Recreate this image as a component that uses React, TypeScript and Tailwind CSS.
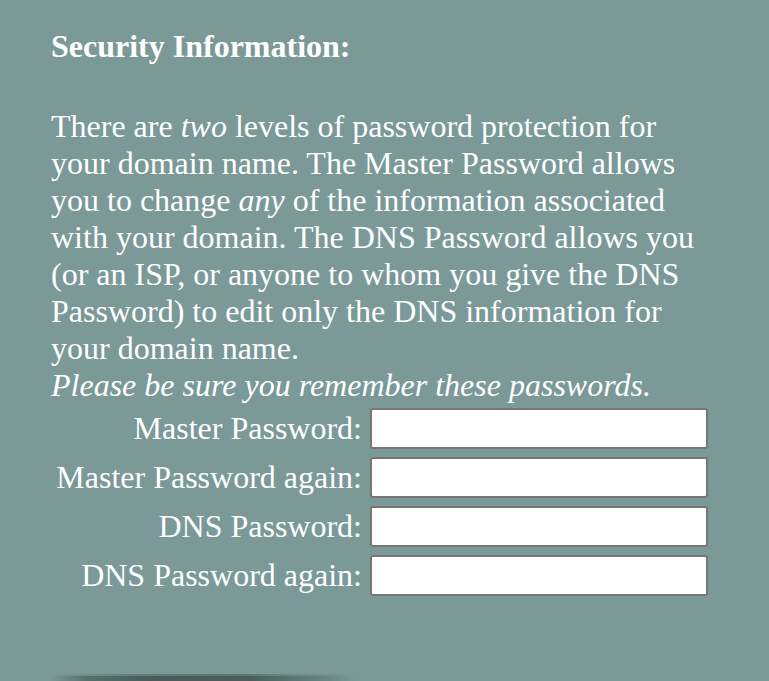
import React from "react";

const fields = [
    "Master Password:",
    "Master Password again:",
    "DNS Password:",
    "DNS Password again:",
];

const App = () => {
    return (
        <div className="h-screen w-full bg-[#7a9997] text-white font-[family-name:Liberation_Serif,serif] overflow-hidden">
            <div className="pl-[51px] pt-[28px]">
                <h2 className="text-[32px] font-bold leading-[37px]">Security Information:</h2>

                <p className="mt-[43px] text-[32px] leading-[37px] w-[660px]">
                    There are <i>two</i> levels of password protection for your domain name. The Master Password
                    allows you to change <i>any</i> of the information associated with your domain. The DNS Password
                    allows you (or an ISP, or anyone to whom you give the DNS Password) to edit only the DNS
                    information for your domain name.
                    <br />
                    <i>Please be sure you remember these passwords.</i>
                </p>

                <div className="mt-[4px] grid grid-cols-[311px_338px] gap-x-[8px] gap-y-[8px] items-center">
                    {fields.map((label) => (
                        <React.Fragment key={label}>
                            <label className="text-right text-[32px] leading-[37px] whitespace-nowrap">{label}</label>
                            <input
                                type="password"
                                className="h-[41px] w-[338px] bg-white border-2 border-[#767676] rounded-[3px] px-2 text-black" />
                        </React.Fragment>
                    ))}
                </div>
            </div>

            {/* shadow of the next panel, peeking in at the bottom */}
            <div className="mt-[78px] ml-[50px] w-[305px] flex flex-col">
                <div className="h-[2px] bg-[linear-gradient(to_right,transparent,rgba(90,110,106,0.6)_25%,rgba(80,100,96,0.7)_60%,transparent)]" />
                <div className="h-[5px] bg-[linear-gradient(to_right,transparent,#5a6f6b_12%,#485b57_35%,#4a5d59_65%,#6a8380_90%,transparent)]" />
            </div>
        </div>
    );
};

export default App;
